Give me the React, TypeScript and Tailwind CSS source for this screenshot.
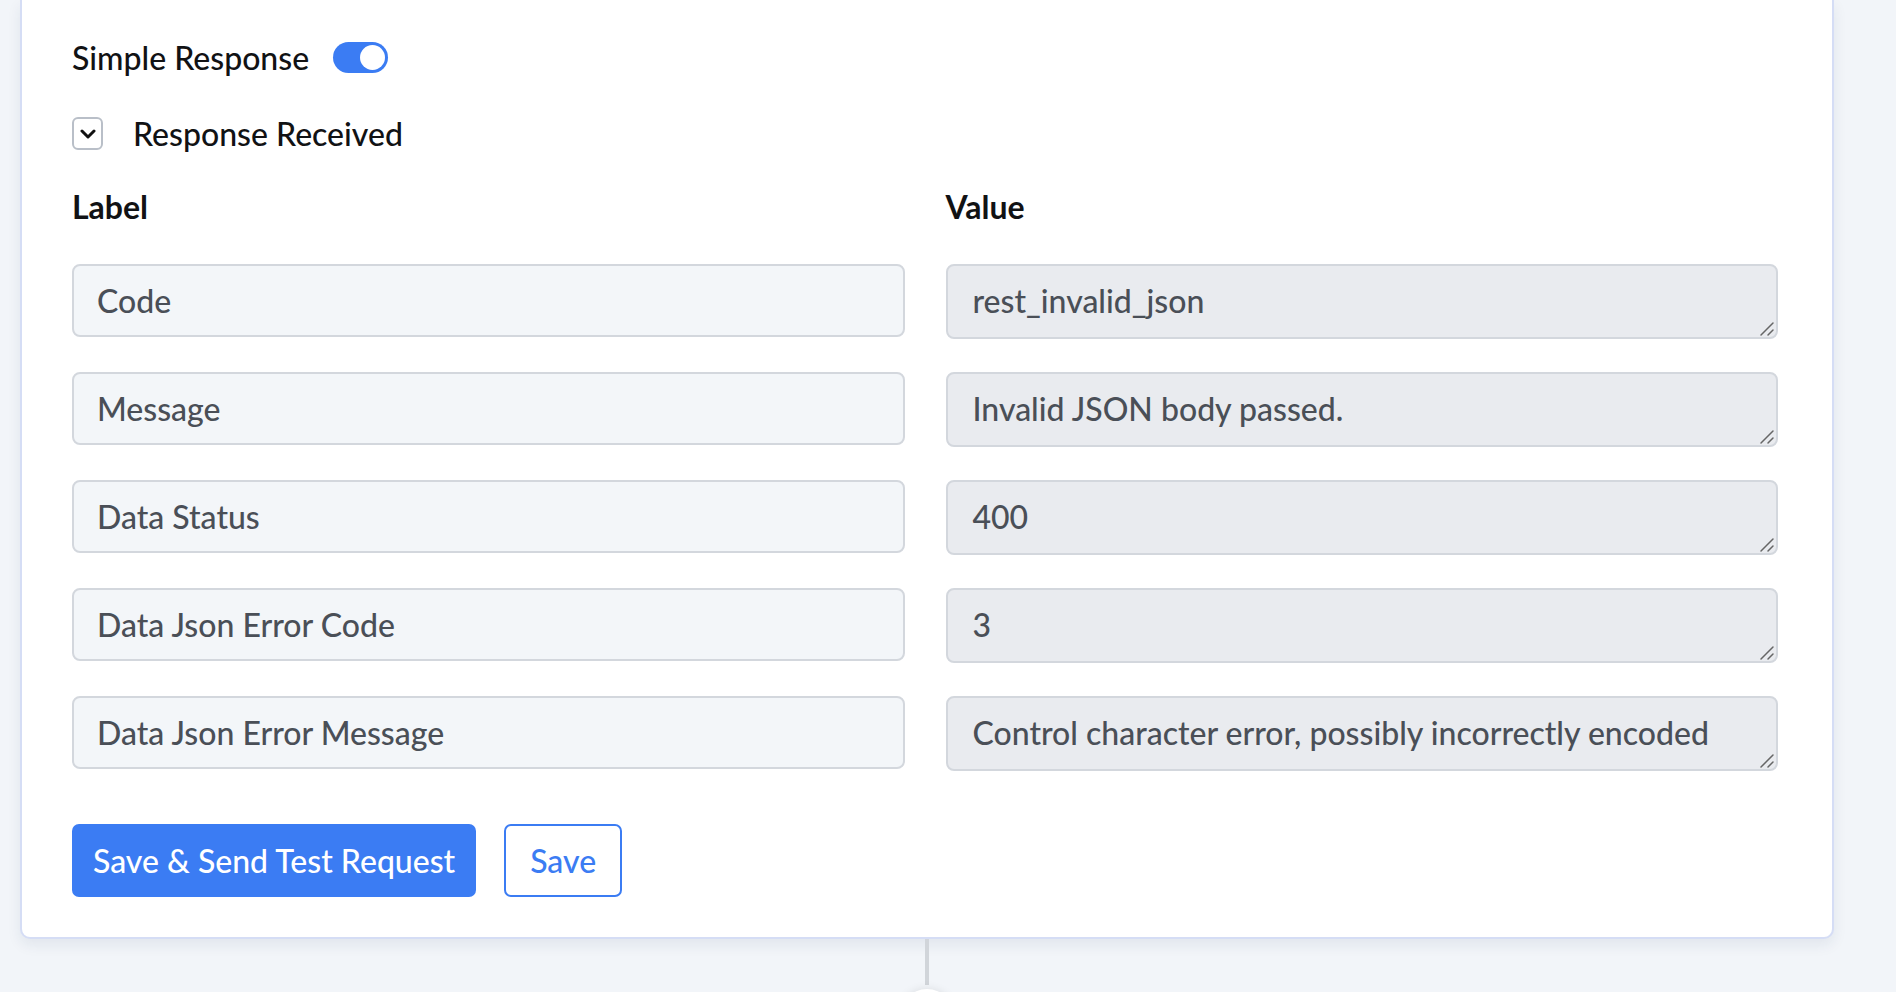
import { useState } from 'react';

const rows = [
  { label: 'Code', value: 'rest_invalid_json' },
  { label: 'Message', value: 'Invalid JSON body passed.' },
  { label: 'Data Status', value: '400' },
  { label: 'Data Json Error Code', value: '3' },
  { label: 'Data Json Error Message', value: 'Control character error, possibly incorrectly encoded' },
];

export default function App() {
  const [simple, setSimple] = useState(true);
  const [open, setOpen] = useState(true);

  return (
    <div
      className="h-[992px] w-full overflow-hidden bg-[#f2f5f9] pl-[20px] text-[32px] font-medium leading-[37px] text-[#111214]"
      style={{ fontFamily: 'Lato, "Noto Sans", sans-serif' }}
    >
      {/* Card */}
      <div className="w-[1814px] rounded-b-[10px] border-x-2 border-b-2 border-[#d5ddf5] bg-white pl-[50px] pr-[54px] pt-[39px] pb-[40px] shadow-[0_6px_14px_rgba(30,50,90,0.08)]">
        <div className="flex h-[37px] items-center">
          <span>Simple Response</span>
          <button
            onClick={() => setSimple((s) => !s)}
            className={`ml-[24px] flex h-[31px] w-[55px] items-center rounded-full px-[3px] ${simple ? 'justify-end bg-[#3b7cf3]' : 'justify-start bg-gray-300'}`}
          >
            <span className="h-[25px] w-[25px] rounded-full bg-white" />
          </button>
        </div>

        <div className="mt-[39px] flex h-[37px] items-center">
          <button
            onClick={() => setOpen((o) => !o)}
            className="flex h-[33px] w-[31px] items-center justify-center rounded-[6px] border-2 border-[#b9bfc8] bg-white"
          >
            <svg width="16" height="10" viewBox="0 0 16 10" fill="none">
              <path d="M2 2l6 6 6-6" stroke="#111" strokeWidth="3" strokeLinecap="round" strokeLinejoin="round" />
            </svg>
          </button>
          <span className="ml-[30px]">Response Received</span>
        </div>

        {open && (
          <>
            <div className="mt-[36px] grid grid-cols-2 gap-x-[41px] font-bold">
              <span>Label</span>
              <span>Value</span>
            </div>

            <div className="mt-[39px] grid grid-cols-2 gap-x-[41px] gap-y-[33px]">
              {rows.map((r) => (
                <Row key={r.label} label={r.label} value={r.value} />
              ))}
            </div>
          </>
        )}

        <div className="mt-[53px] flex items-center gap-[28px]">
          <button className="h-[73px] rounded-[7px] bg-[#3b7cf3] px-[21px] font-medium text-white">
            Save &amp; Send Test Request
          </button>
          <button className="h-[73px] rounded-[7px] border-2 border-[#3b7cf3] bg-white px-[24px] font-medium text-[#3b7cf3]">
            Save
          </button>
        </div>
      </div>

      {/* Connector */}
      <div className="flex w-[1814px] flex-col items-center">
        <div className="h-[46px] w-[4px] bg-[#d1d5da]" />
        <div className="mt-[4px] h-[56px] w-[56px] rounded-full bg-white shadow-[0_0_10px_rgba(0,0,0,0.1)]" />
      </div>
    </div>
  );
}

function Row({ label, value }: { label: string; value: string }) {
  return (
    <>
      <input
        readOnly
        value={label}
        className="h-[73px] w-full rounded-[8px] border-2 border-[#d3d7dd] bg-[#f3f6f9] px-[23px] text-[#4a4f57] outline-none"
      />
      <div className="relative">
        <textarea
          readOnly
          value={value}
          rows={1}
          className="block h-[75px] w-full resize-none overflow-hidden whitespace-nowrap rounded-[8px] border-2 border-[#d3d7dd] bg-[#e9ebef] px-[25px] pt-[16px] text-[#4a4f57] outline-none"
        />
        {/* resize grip */}
        <svg className="pointer-events-none absolute bottom-[2px] right-[3px]" width="16" height="16" viewBox="0 0 16 16">
          <path d="M2 14L14 2M9 14l5-5" stroke="#666" strokeWidth="1.5" strokeLinecap="round" />
        </svg>
      </div>
    </>
  );
}
